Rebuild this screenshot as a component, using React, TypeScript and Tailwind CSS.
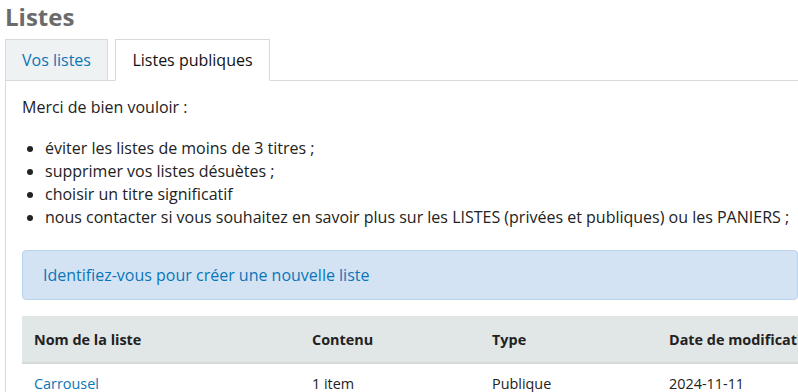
import React from 'react';

const items = [
  'éviter les listes de moins de 3 titres ;',
  'supprimer vos listes désuètes ;',
  'choisir un titre significatif',
  'nous contacter si vous souhaitez en savoir plus sur les LISTES (privées et publiques) ou les PANIERS ;',
];

const App: React.FC = () => {
  return (
    <div className="w-[798px] h-[392px] overflow-hidden bg-white pl-[5px] font-['Open_Sans',sans-serif] text-[#222]">
      <h1 className="text-[24px] font-bold text-[#6b6b6b] leading-[32px] pt-[1px]">Listes</h1>

      <div className="flex mt-[6px]">
        <div className="w-[103px] h-[42px] border border-[#d6dada] bg-[#eef2f2] flex items-center justify-center text-[16px] text-[#0a76b7]">
          Vos listes
        </div>
        <div className="w-[7px] border-b border-[#d6dada]"></div>
        <div className="w-[155px] h-[42px] border border-[#d6dada] border-b-white bg-white flex items-center justify-center text-[16px] text-[#111]">
          Listes publiques
        </div>
        <div className="flex-1 border-b border-[#d6dada]"></div>
      </div>

      <div className="border-l border-[#d6dada] pl-[16px] pt-[15px] text-[16px] leading-[23px] whitespace-nowrap">
        <p>Merci de bien vouloir :</p>
        <ul className="list-disc pl-[23px] mt-[18px]">
          {items.map((t) => (
            <li key={t}>{t}</li>
          ))}
        </ul>

        <div className="mt-[21px] h-[50px] rounded-[4px] border border-[#bcd3ec] bg-[#d4e3f4] flex items-center px-[20px] text-[#0a76b7]">
          Identifiez-vous pour créer une nouvelle liste
        </div>

        <table className="mt-[16px] w-[800px] table-fixed text-left border-collapse">
          <thead>
            <tr className="bg-[#e1e6e6] border-b-2 border-[#d4d9d9]">
              <th className="w-[278px] h-[47px] px-[12px] font-bold text-[14.4px]">Nom de la liste</th>
              <th className="w-[180px] px-[12px] font-bold text-[14.4px]">Contenu</th>
              <th className="w-[177px] px-[12px] font-bold text-[14.4px]">Type</th>
              <th className="px-[12px] font-bold text-[14.4px] overflow-hidden">Date de modification</th>
            </tr>
          </thead>
          <tbody>
            <tr className="text-[14.4px]">
              <td className="px-[12px] pt-[8px] text-[#0a76b7]">Carrousel</td>
              <td className="px-[12px] pt-[8px]">1 item</td>
              <td className="px-[12px] pt-[8px]">Publique</td>
              <td className="px-[12px] pt-[8px]">2024-11-11</td>
            </tr>
          </tbody>
        </table>
      </div>
    </div>
  );
};

export default App;
